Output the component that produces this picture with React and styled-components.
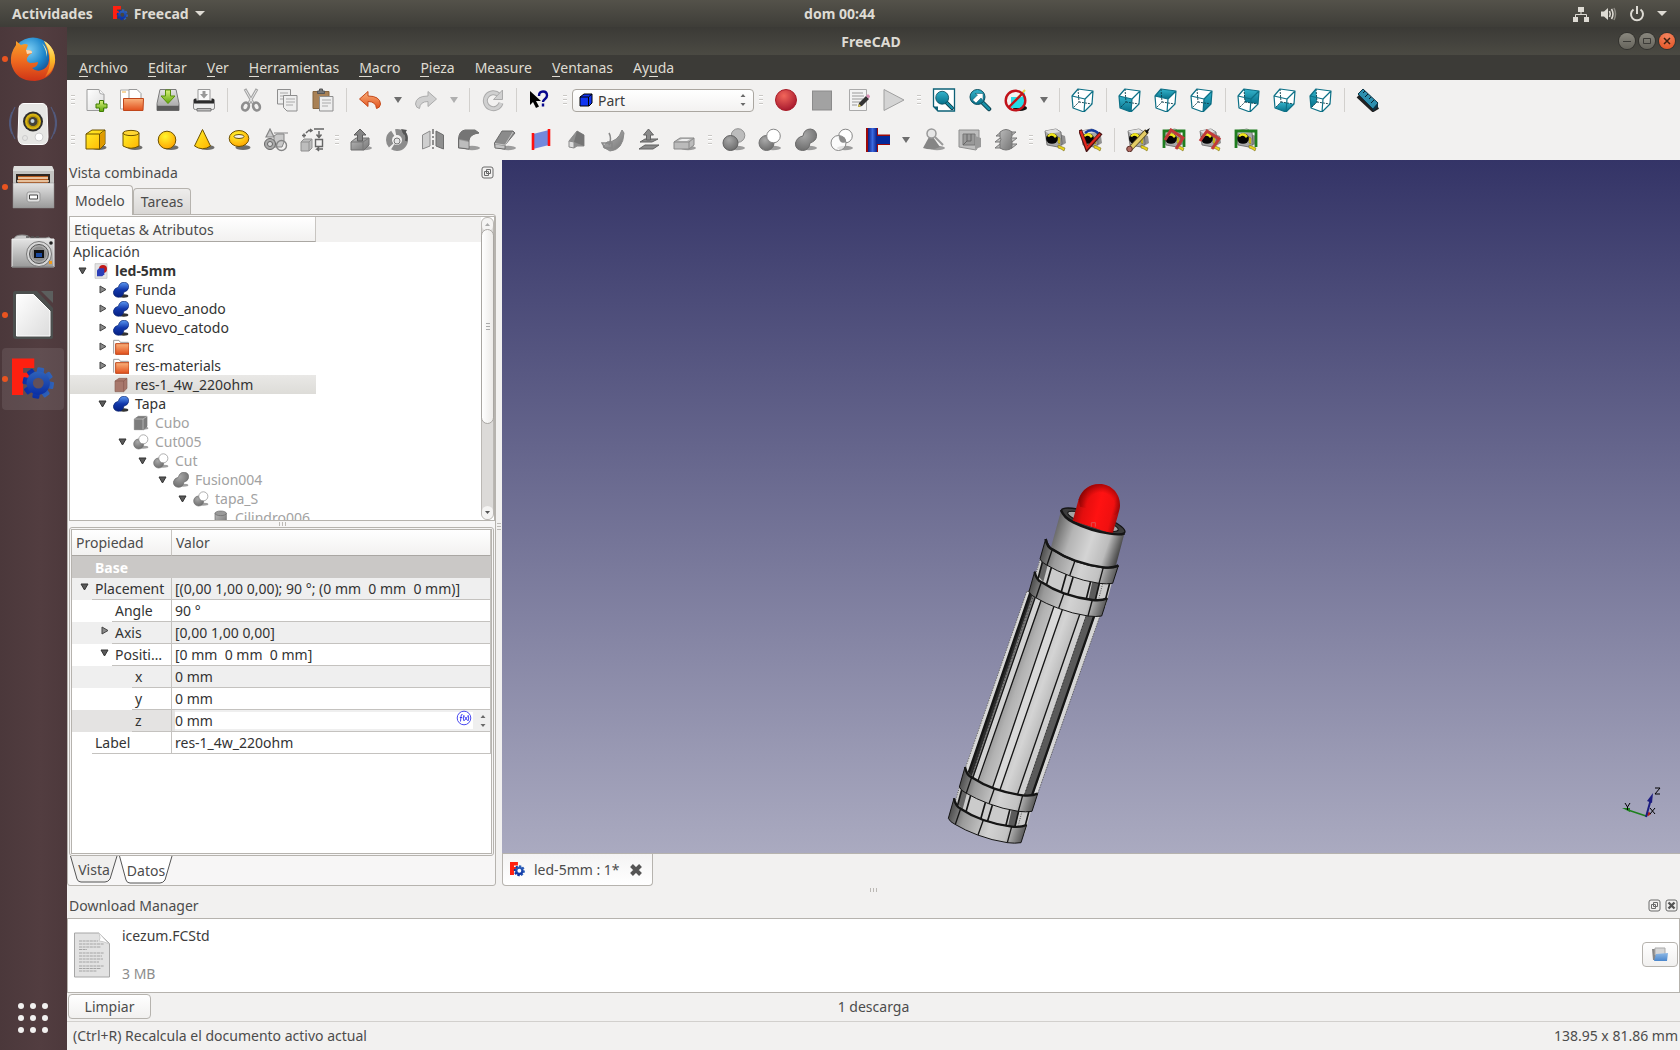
import React, { useState } from "react";
import styled, { createGlobalStyle } from "styled-components";

const GlobalStyle = createGlobalStyle`
  * { box-sizing: border-box; }
  html, body, #root { height: 100%; }
  body { margin: 0; overflow: hidden; font: 14px/19px "Noto Sans", "Open Sans", sans-serif; color: #3c3c3c; background: #f2f1f0; }
  button, input, select { font: inherit; color: inherit; margin: 0; padding: 0; border: 0; background: none; }
  button { cursor: default; }
  ul { list-style: none; margin: 0; padding: 0; }
  svg { display: block; flex: none; }
`;

/* ---------- shared paint ---------- */

const Lin = ({ id, stops, x2 = 0, y2 = 1 }) => (
  <linearGradient id={id} x1="0" y1="0" x2={x2} y2={y2}>
    {stops.map((c, i) => <stop key={i} offset={i / (stops.length - 1)} stopColor={c} />)}
  </linearGradient>
);
const Rad = ({ id, stops }) => (
  <radialGradient id={id} cx="0.4" cy="0.3" r="0.75">
    {stops.map((c, i) => <stop key={i} offset={i / (stops.length - 1)} stopColor={c} />)}
  </radialGradient>
);

const HiddenDefs = styled.svg`position: absolute; width: 0; height: 0;`;

const Paints = () => (
  <HiddenDefs aria-hidden="true">
    <defs>
      <Lin id="paper" stops={["#ffffff", "#dcdcdc"]} x2={1} />
      <Lin id="orange" stops={["#f9b27c", "#e2501c"]} />
      <Lin id="metal" stops={["#e4e4e4", "#9a9a9a"]} />
      <Lin id="green" stops={["#d8f27a", "#5fa50a"]} />
      <Lin id="yellow" stops={["#fff02a", "#ffb400"]} x2={1} />
      <Rad id="yellowBall" stops={["#fff62e", "#ffa200"]} />
      <Lin id="gray" stops={["#b9b9b9", "#757575"]} x2={1} />
      <Rad id="grayBall" stops={["#a8a8a8", "#6a6a6a"]} />
      <Lin id="teal" stops={["#35b4cc", "#06708a"]} />
      <Rad id="red" stops={["#f2665a", "#a3152c"]} />
      <Lin id="blue" stops={["#5c98f2", "#1238ac", "#061f80"]} />
      <Rad id="sky" stops={["#7fd0f4", "#1c86cc", "#10296a"]} />
      <Lin id="fire" stops={["#f7a12a", "#ee6a1f", "#cf3417"]} />
      <Lin id="sun" stops={["#fff39a", "#fbc02a", "#ee6a1f"]} />
      <Lin id="tube" stops={["#0a1f88", "#3b6ae0", "#0a1f88"]} x2={1} y2={0} />
      <Lin id="folderBlue" stops={["#8cb8e6", "#4a86cc"]} />
      <Lin id="gearBlue" stops={["#2f62b8", "#0a2fa4"]} />
    </defs>
  </HiddenDefs>
);

const Svg = ({ s = 24, w, h, box, children }) => (
  <svg width={w || s} height={h || s} viewBox={box || "0 0 24 24"} aria-hidden="true">{children}</svg>
);

/* ---------- icons ---------- */

const Shadow = ({ x = 15, y = 19.5 }) => <ellipse cx={x} cy={y} rx="7.5" ry="2.4" fill="#000" opacity=".55" />;
const GShadow = ({ x = 15, y = 20 }) => <ellipse cx={x} cy={y} rx="8" ry="2.2" fill="#777" opacity=".7" />;

const cubeFaces = {
  front: "1,8 14,11 13,24 2,20",
  top: "1,8 7,1 22,3 14,11",
  right: "14,11 22,3 21,16 13,24",
  rear: "7,1 22,3 21,16 8,14",
  bottom: "2,20 13,24 21,16 8,14",
  left: "1,8 7,1 8,14 2,20",
};
const ViewCube = ({ face }) => (
  <g strokeLinejoin="round">
    <polygon points="1,8 7,1 22,3 21,16 13,24 2,20" fill="#fff" />
    {face && <polygon points={cubeFaces[face]} fill="url(#teal)" />}
    <path d="M7 1L8 14L2 20M8 14L21 16" fill="none" stroke="#0b3a46" strokeWidth=".9" strokeDasharray="2 1" />
    <path d="M1 8L14 11L13 24L2 20ZM1 8L7 1L22 3L14 11M22 3L21 16L13 24" fill="none" stroke="#0d7086" strokeWidth="1.2" />
  </g>
);

const Tape = () => (
  <g>
    <path d="M14 5l8 3l1 7l-5 3z" fill="#000" opacity=".4" />
    <path d="M2 3L13 1L18 4L19 16L15 19L4 17Z" fill="#a9a9a9" stroke="#555" strokeWidth=".7" />
    <path d="M2 3L13 1L17 4L6 6Z" fill="#dedede" />
    <ellipse cx="9" cy="10.500" rx="6" ry="5.200" fill="#050505" />
    <path d="M4 8Q9 2 14 8L12 10Q9 6 6 9Z" fill="#f0e51d" />
    <path d="M15 9l2 1v6l-2-1zM15 17l7 3l-1 3l-3-2l-3-1z" fill="#e8d21a" stroke="#6b6114" strokeWidth=".5" />
  </g>
);

const DocPage = () => <path d="M3 1.500h12l5 5V22.500H3z" fill="url(#paper)" stroke="#9b9b9b" />;
const Magnifier = () => (
  <g>
    <path d="M14 14l7 7" stroke="#0b3f4c" strokeWidth="4.500" strokeLinecap="round" />
    <path d="M14 14l7 7" stroke="#1a90a8" strokeWidth="2.500" strokeLinecap="round" />
    <circle cx="9.500" cy="9" r="7.500" fill="url(#teal)" stroke="#0a4f60" />
  </g>
);

const freecadGear = (
  <g>
    <path d="M0 0H14V6H7V9H12V15H7V23H0Z" fill="#ff2010" />
    <g transform="translate(16.500 15.500)">
      {[0, 45, 90, 135].map((a) => (
        <rect key={a} x="-2.200" y="-9.800" width="4.400" height="19.600" rx=".8" fill="url(#gearBlue)" transform={`rotate(${a + 10})`} />
      ))}
      <circle r="7.300" fill="url(#gearBlue)" />
    </g>
  </g>
);
const Logo = ({ s = 16, hole = "#f2f1f0" }) => (
  <Svg s={s} box="0 0 26.500 26.500">
    {freecadGear}
    <circle cx="16.500" cy="15.500" r="3.400" fill={hole} />
  </Svg>
);

const I = {
  new: <><DocPage /><path d="M15 1.500l1 4l4 1" fill="#fff" stroke="#aaa" /><path d="M15.500 12.500h4v3.500h3.500v4h-3.500v3.500h-4v-3.500h-3.500v-4h3.500z" fill="url(#green)" stroke="#3f7d05" /></>,
  open: <><path d="M.5 2h9l2 3v16h-11z" fill="#fff" stroke="#aaa" /><path d="M2 4h4" stroke="#f0b040" /><path d="M9 1.500h8l4 4v6H9z" fill="#fff" stroke="#999" /><path d="M3.500 10.500h20l-.5 12H3.500z" fill="url(#orange)" stroke="#c0461a" /></>,
  save: <><path d="M4 1.500h16l3 14v7H1v-7z" fill="url(#metal)" stroke="#7a7a7a" /><path d="M1 16.500h22v6H1z" fill="#5b5b5b" /><path d="M1.500 17h21" stroke="#ddd" /><path d="M9.500 2h5v6h4.500l-7 7.500l-7-7.500h4.500z" fill="url(#green)" stroke="#579108" /></>,
  print: <><path d="M6 1.500h12v11H6z" fill="#fafafa" stroke="#999" /><path d="M10.500 3h3v3h2.500l-4 4.500l-4-4.500h2.500z" fill="#999" /><path d="M1.500 12q0-1.500 2-1.500h1v2h15v-2h1q2 0 2 1.500v8h-21z" fill="#2b2b2b" /><path d="M1.500 15.500h21v4.500q0 1.500-2 1.500h-17q-2 0-2-1.500z" fill="#ececec" stroke="#888" /><path d="M5 20.500h14v2.500H5z" fill="#bdbdbd" stroke="#777" /></>,
  cut: <g fill="none"><path d="M6 1L14.500 16M18 1L9.500 16" stroke="#a4a4a4" strokeWidth="3" /><path d="M6.500 2L14 15M17.500 2L10 15" stroke="#e8e8e8" strokeWidth="1" /><ellipse cx="6.500" cy="18.500" rx="3.200" ry="4" transform="rotate(25 6.500 18.500)" stroke="#8e8e8e" strokeWidth="2.600" /><ellipse cx="17.500" cy="18.500" rx="3.200" ry="4" transform="rotate(-25 17.500 18.500)" stroke="#8e8e8e" strokeWidth="2.600" /></g>,
  copy: <><path d="M2.500 1.500h13v14.500h-13z" fill="#eee" stroke="#8e8e8e" /><path d="M5 5h8M5 8h4M5 11h4" stroke="#aaa" /><path d="M8.500 7.500h13.500v15.500h-10l-3.500-3.500z" fill="#eee" stroke="#8e8e8e" /><path d="M11 11h9M11 14h9M11 17h7" stroke="#aaa" /></>,
  paste: <><path d="M2 3.500h16v17H2z" fill="#a98155" stroke="#85653f" /><path d="M6.500 5.500v-2.500h2v-2h3v2h2v2.500z" fill="#777" stroke="#555" /><path d="M8.500 8.500h13.500v14.500h-13.500z" fill="#eee" stroke="#8e8e8e" /><path d="M11 12h9M11 15h9M11 18h6" stroke="#aaa" /></>,
  undo: <path d="M1.500 11L10 3.500V8Q22 8 22.500 16Q22 20 18.500 20.500Q18 13.500 10 13.500V18.500Z" fill="url(#orange)" stroke="#c5491a" strokeLinejoin="round" />,
  redo: <path d="M22.500 11L14 3.500V8Q2 8 1.500 16Q2 20 5.500 20.500Q6 13.500 14 13.500V18.500Z" fill="#d0d0d0" stroke="#acacac" strokeLinejoin="round" />,
  refresh: <><path d="M18 7A8 8 0 1 0 20 15" fill="none" stroke="#ababab" strokeWidth="5" /><path d="M18 7A8 8 0 1 0 20 15" fill="none" stroke="#d0d0d0" strokeWidth="3" /><path d="M12.500 11.500H21.500V2Z" fill="#d0d0d0" stroke="#ababab" /></>,
  whats: <><path d="M2 3v14l3-3l3 6l3-1.500l-3-5.500h5z" fill="#000" /><path d="M11 8q0-4.500 4-4.500t4 4q0 2-2 3.500t-2 3M15 15.500v3" fill="none" stroke="#07078c" strokeWidth="2.400" /></>,
  record: <circle cx="12" cy="12" r="10.500" fill="url(#red)" stroke="#a91d28" />,
  stop: <rect x="2.500" y="3" width="19" height="19" fill="#a2a2a2" stroke="#8b8b8b" />,
  edit: <><path d="M3.500 1.500h17v21h-17z" fill="#f3f3f3" stroke="#aaa" /><path d="M6 5h11M6 8h12M6 11h11M6 14h8M6 17h5" stroke="#999" /><path d="M12 19l1-4l7-7l3 3l-7 7z" fill="#333" /><path d="M12 19l1-3l2 2z" fill="#ead24a" /><path d="M20 8l2-2l2.500 2.500l-2 2z" fill="#d88fb4" /></>,
  play: <path d="M2 1.500L22 12L2 22.500Z" fill="#d4d4d4" stroke="#a0a0a0" />,
  fit: <><path d="M1.500 1h21v22H6l-4.500-4.500z" fill="#fff" stroke="#0d6177" strokeWidth="1.300" /><path d="M1.500 18.500H6V23" fill="#0d6177" /><g transform="translate(2 2) scale(.86)"><Magnifier /></g></>,
  zoomSel: <><Magnifier /><path d="M4.500 12l5-5l-2.500-1.500h8v7l-2-2.500l-5 5z" fill="#fff" stroke="#0a4f60" strokeWidth=".5" /></>,
  noDraw: <><ellipse cx="16" cy="20" rx="7" ry="3" fill="#111" /><path d="M7 9h11l3-5v12l-4 4H7z" fill="#25dbe6" /><path d="M10 14L21 2" stroke="#ead24a" strokeWidth="2" /><circle cx="11.500" cy="12.500" r="9.800" fill="none" stroke="#c1121a" strokeWidth="2.400" /><path d="M4.500 5.500L18.500 19.500M18.500 5.500L4.500 19.500" stroke="none" /><path d="M4.500 19.500L18.500 5.500" stroke="#c1121a" strokeWidth="2.400" /></>,
  iso: <ViewCube />, front: <ViewCube face="front" />, top: <ViewCube face="top" />, right: <ViewCube face="right" />,
  rear: <ViewCube face="rear" />, bottom: <ViewCube face="bottom" />, left: <ViewCube face="left" />,
  ruler: <><path d="M2 8L17 22L22 19" stroke="#222" strokeWidth="4" fill="none" /><path d="M2 6L7 1L22 15L17 21Z" fill="#2d8fae" stroke="#0c3547" /><path d="M17 21L22 15v4l-5 4z" fill="#0c3547" /><path d="M9 3l-2 2M12 6l-3 3M15 9l-2 2M18 12l-3 3" stroke="#08202c" /></>,

  box: <><Shadow /><path d="M2 6L8 2H21V16L16 21H2Z" fill="url(#yellow)" stroke="#6e5200" strokeLinejoin="round" /><path d="M2 6H15.500L21 2M15.500 6V21" fill="none" stroke="#6e5200" /><path d="M16 6.500L20.500 3V16L16 20.500Z" fill="#e09a00" /></>,
  cyl: <><Shadow /><path d="M3 5V18q8 4.500 16 0V5z" fill="url(#yellow)" stroke="#6e5200" /><ellipse cx="11" cy="5" rx="8" ry="2.600" fill="#ffd633" stroke="#6e5200" /></>,
  sphere: <><Shadow /><circle cx="11" cy="12" r="8.800" fill="url(#yellowBall)" stroke="#6e5200" /></>,
  cone: <><Shadow /><path d="M10.500 1.500L2.500 18q8 5.500 16 0z" fill="url(#yellow)" stroke="#6e5200" /></>,
  torus: <><Shadow /><ellipse cx="11" cy="10.500" rx="9.800" ry="8" fill="url(#yellowBall)" stroke="#6e5200" /><ellipse cx="11" cy="8.500" rx="5" ry="2" fill="#f2f1f0" stroke="#6e5200" /></>,
  prims: <g stroke="#858585" fill="#c9c9c9"><path d="M6 1L2 9h8zM10 5h14" strokeWidth="1.200" /><path d="M10 8l3-2h7v8l-2 5h-8z" /><circle cx="6" cy="16" r="5.500" fill="#a9a9a9" stroke="#666" /><circle cx="6" cy="16" r="2.500" fill="#ddd" stroke="#666" /><circle cx="17.500" cy="17.500" r="5" fill="none" strokeWidth="1.400" /></g>,
  builder: <g stroke="#666" fill="none"><path d="M1 14l3-3h8v9l-3 3H1z" fill="#bdbdbd" stroke="#909090" /><path d="M1 14h8v9M9 14l3-3" stroke="#909090" /><path d="M15.500 11.500h7v7h-7zM14 1h10" strokeWidth="1.400" /><path d="M19 3v6M16.500 6.500l2.500 3l2.500-3M2 7.500h4M4 5.500v4M6 5l2-2M8 2.500h4M10 1l2 1.500l-2 1.500M23 21h-6l2-2M17 21l2 2" strokeWidth="1.500" /></g>,
  extrude: <><GShadow /><path d="M2 14l5-4h13v7l-5 5H2z" fill="url(#gray)" stroke="#6f6f6f" /><path d="M2 14h12l6-4M14 14v8" stroke="#777" fill="none" /><path d="M11 1l6 6h-3.500v6h-5V7H5z" fill="#858585" stroke="#5d5d5d" /></>,
  revolve: <><circle cx="12" cy="12" r="8" fill="none" stroke="#8c8c8c" strokeWidth="6" strokeDasharray="17 2 14 3" /><circle cx="12" cy="13" r="3" fill="#e4e4e4" stroke="#777" /><path d="M18 3q5 4 3 10" stroke="#555" fill="none" strokeWidth="2.400" /><path d="M16 1l6 1l-3 5z" fill="#555" /></>,
  mirror: <><path d="M1.500 7L9 3V18l-7.500 3z" fill="#cfcfcf" stroke="#8c8c8c" /><path d="M15 3l7.500 4v14L15 18z" fill="#8f8f8f" stroke="#6d6d6d" /><path d="M12 1v22" stroke="#777" strokeWidth="1.600" strokeDasharray="5 2 2 2" /></>,
  fillet: <><GShadow /><path d="M1.500 20V11Q2 3 8 2H18L22 5Q13 6 12 12V21Z" fill="#9a9a9a" stroke="#6a6a6a" /><path d="M1.500 11Q2 3 8 2H18L22 5Q13 6 12 13Z" fill="#757575" /><path d="M2.500 12L11.500 14V20.500L2.500 19Z" fill="#bdbdbd" /></>,
  chamfer: <><GShadow /><path d="M1.500 15L9 3H20L22 5L12 17V21L2 20Z" fill="#8b8b8b" stroke="#6a6a6a" /><path d="M2 15.500L12 17L20 4" stroke="#c4c4c4" fill="none" /><path d="M2.500 16.500L11.500 18V20.500L2.500 19.500Z" fill="#c4c4c4" /></>,
  ruled: <><path d="M4 6L20 2V17L4 21z" fill="#7388dd" /><path d="M4 5V22M20 1V18" stroke="#ff1010" strokeWidth="2.600" /></>,
  loft: <><path d="M4 13L12 3L19 7V18L12 18L9 20Z" fill="#8e8e8e" stroke="#8a8a8a" /><path d="M12 3L19 7V18L9 14Z" fill="#757575" /><path d="M4 13l5 1v6l-5-1z" fill="#dedede" stroke="#8a8a8a" /></>,
  sweep: <><path d="M6 14Q17 14 21 2l2 3q-1 17-14 18L2 19z" fill="url(#gray)" stroke="#8a8a8a" /><path d="M8 5q3 5 0 12M1 15h10v5H4z" stroke="#888" fill="none" strokeWidth="1.500" /></>,
  offset: <g fill="#8a8a8a" stroke="#636363"><path d="M2 21l6-4h14l-6 4zM3 14l5-3h13l-6 3z" /><path d="M11.500 1l5 6h-3v5h-4V7h-3z" /></g>,
  thick: <><GShadow /><path d="M1 14l6-4h14v7l-5 4H1z" fill="#bbb" stroke="#888" /><path d="M1 14h15l5-4M16 14v7" fill="none" stroke="#888" /><path d="M5 13l4-2h8l-3 2z" fill="#eee" /></>,
  boolean: <><GShadow /><circle cx="16" cy="7.500" r="6.800" fill="#bcbcbc" stroke="#909090" /><circle cx="8.500" cy="15" r="7.500" fill="url(#grayBall)" stroke="#606060" /></>,
  bcut: <><GShadow /><circle cx="8.500" cy="15" r="7.500" fill="url(#grayBall)" stroke="#707070" /><circle cx="15.500" cy="8" r="6.800" fill="#fff" stroke="#888" /></>,
  fuse: <><GShadow /><path d="M9 8Q10 1 16.500 1Q23 2 22.500 8.500Q22 13 16 15Q15 22.500 8.500 22.500Q1 22 1.500 15Q3 9 9 8Z" fill="url(#grayBall)" stroke="#6b6b6b" /></>,
  common: <><GShadow /><circle cx="15.500" cy="8" r="6.800" fill="#fff" stroke="#888" /><circle cx="8.500" cy="15" r="7.500" fill="#fff" fillOpacity=".7" stroke="#888" /><path d="M9 8q7-1 7 6q-7 3-7-6z" fill="#8c8c8c" /></>,
  connect: <><path d="M0 0h12v6.500h12v10.500H12v7H0z" fill="#9c0a0a" /><path d="M11 8h13v8H11z" fill="#062a9a" /><path d="M2 0h9v24H2z" fill="url(#tube)" /></>,
  check: <><GShadow /><path d="M7 9h4l7 10q-8 4-17 1z" fill="#858585" /><circle cx="9.500" cy="5.500" r="4.500" fill="#e6e6e6" stroke="#999" strokeWidth="1.500" /><path d="M13 9l8 8" stroke="#999" strokeWidth="2" /></>,
  section: <><path d="M1 2h20v15l-3 5L1 19z" fill="#bdbdbd" stroke="#8f8f8f" /><path d="M5 6h12v11H5z" fill="#999" stroke="#777" /><path d="M13 6v7H9l-4 4M9 13V6" stroke="#666" fill="none" /><path d="M17 8l6 2v9l-6 2z" fill="#9a9a9a" /></>,
  cross: <><path d="M1 20l5-4h17l-5 4zM1 14l5-4h17l-5 4zM2 8l5-4h15l-5 4z" fill="#999" fillOpacity=".55" stroke="#777" /><path d="M6 4q6-5 12 0v4q-2 3 0 5v7q-6 4-12 0v-6q2-3 0-5z" fill="url(#gray)" stroke="#777" /></>,
  mLinear: <Tape />,
  mAngle: <><Tape /><path d="M6 5q7-6 14 1" stroke="#153a9a" strokeWidth="2.400" fill="none" /><path d="M1 2L8 21L22 5" stroke="#4a1414" strokeWidth="4" fill="none" /><path d="M1.500 3L8 20L21 6" stroke="#e0261c" strokeWidth="2.200" fill="none" /></>,
  mRefresh: <><Tape /><path d="M3 22L21 3" stroke="#51431a" strokeWidth="5" /><path d="M4.500 20.500L20 4" stroke="#e4cd66" strokeWidth="3.500" /><path d="M24 0l-5 3l2 3z" fill="#111" /><circle cx="3.500" cy="21" r="2.800" fill="#b06a60" stroke="#5c302c" /></>,
  mClear: <><Tape /><path d="M2 20V3H22V19" fill="none" stroke="#1f7d1f" strokeWidth="2.800" /><path d="M3 12L9 2L21 10L14 21" stroke="#c23a3a" strokeWidth="3" fill="none" /></>,
  m3d: <><Tape /><path d="M2 13L9 3L21 11L14 21" stroke="#c23a3a" strokeWidth="3" fill="none" /></>,
  mDelta: <><Tape /><path d="M2 20V3H22V19" fill="none" stroke="#1f7d1f" strokeWidth="2.800" /></>,
};

/* ---------- top panel ---------- */

const Screen = styled.div`display: flex; flex-direction: column; height: 100vh;`;
const TopBar = styled.header`
  height: 27px; flex: none; display: grid; grid-template-columns: 1fr auto 1fr; align-items: center;
  padding: 0 13px 0 12px; font-weight: 700; color: #dedbd4; background: linear-gradient(#54524a, #3e3d38);
`;
const BarSide = styled.div`display: flex; align-items: center; gap: ${(p) => p.$gap}px; justify-content: ${(p) => p.$end ? "flex-end" : "flex-start"};`;
const BarButton = styled.button`display: flex; align-items: center; gap: 6px; white-space: nowrap;`;
const Desktop = styled.div`flex: 1; min-height: 0; display: flex;`;
const Caret = ({ color = "#dedbd4" }) => <Svg w={10} h={5} box="0 0 10 5"><path d="M0 0H10L5 5Z" fill={color} /></Svg>;

const Top = () => (
  <TopBar>
    <BarSide $gap={20}>
      <BarButton>Actividades</BarButton>
      <BarButton><Logo s={15} hole="#47463f" />Freecad<Caret /></BarButton>
    </BarSide>
    <BarButton>dom 00:44</BarButton>
    <BarSide $gap={12} $end>
      <Svg s={16} box="0 0 16 16"><path d="M5 1h6v5H5zM0 11h5v5H0zM11 11h5v5h-5z" fill="#dedbd4" /><path d="M8 6v3M2.500 11V8.500h11V11" fill="none" stroke="#dedbd4" /></Svg>
      <Svg s={16} box="0 0 16 16"><path d="M0 5.500h3L7 2v12l-4-3.500H0z" fill="#dedbd4" /><path d="M8.500 5q1.500 3 0 6M10.500 3q3 5 0 10" fill="none" stroke="#dedbd4" strokeWidth="1.600" /><path d="M13 2q3 6 0 12" fill="none" stroke="#8a8880" strokeWidth="1.500" /></Svg>
      <Svg s={16} box="0 0 16 16"><path d="M4.500 3.500A6 6 0 1 0 11.500 3.500M8 0v8" fill="none" stroke="#dedbd4" strokeWidth="2" /></Svg>
      <Caret />
    </BarSide>
  </TopBar>
);

/* ---------- launcher ---------- */

const Dock = styled.nav`
  width: 67px; flex: none; display: flex; flex-direction: column; align-items: center; gap: 2px; padding: 1px 3px 16px 2px;
  background: linear-gradient(90deg, #4b383b, #523d40 60%, #4d393c);
`;
const Launcher = styled.button`
  width: 62px; height: 62px; border-radius: 4px; display: flex; align-items: center; justify-content: center; position: relative;
  background: ${(p) => p.$active ? "rgba(255,255,255,.09)" : "none"};
  &::before { content: ""; position: absolute; left: 0; top: 28px; width: 6px; height: 6px; border-radius: 50%; background: ${(p) => p.$running ? "#e95420" : "transparent"}; }
`;
const DockSpace = styled.div`flex: 1;`;
const AppsButton = styled.button`width: 32px; height: 32px;`;

const apps = [
  { n: "Firefox", run: true, icon: (
    <Svg s={48} box="0 0 48 48">
      <circle cx="24" cy="24" r="21.500" fill="url(#sky)" />
      <path d="M35 6Q47 13 46 27Q44 44 26 46Q6 46 2 28Q1 18 7 10L7 6L12 10Q17 8 19 10L17 15Q24 15 23 18Q19 20 18 23Q17 27 21 28Q25 28 29 27Q29 32 23 33Q28 38 35 34Q41 30 40 21Q39 14 35 6Z" fill="url(#fire)" />
      <path d="M35 6Q47 13 46 27Q44 37 36 42Q41 34 41 25Q41 14 35 6Z" fill="url(#sun)" />
      <path d="M33 8Q39 14 38 22Q37 14 33 8Z" fill="#fff3b0" />
      <path d="M17 15Q24 15 23 18L18 19Z" fill="#fbd7b0" />
    </Svg>) },
  { n: "Rhythmbox", icon: (
    <Svg s={48} box="0 0 48 48">
      <path d="M6 8Q-3 24 6 40M3 13Q-2 24 3 35M42 8Q51 24 42 40M45 13Q50 24 45 35" fill="none" stroke="#52628c" strokeWidth="1.200" opacity=".8" />
      <path d="M15 4.500H33Q37 4.500 38 9L39 38Q39 45.500 33 45.500H15Q9 45.500 9 38L10 9Q11 4.500 15 4.500Z" fill="#e6e6e4" stroke="#fff" />
      <circle cx="24" cy="22.500" r="10" fill="#2d2d2d" /><circle cx="24" cy="22.500" r="8" fill="#d6b414" /><circle cx="24" cy="22.500" r="6" fill="#b89408" /><circle cx="24" cy="22.500" r="4.500" fill="#44423a" /><circle cx="23.500" cy="22" r="2" fill="#c9d6de" />
      <circle cx="30" cy="38" r="4" fill="#fff" stroke="#cfcfcf" /><circle cx="16" cy="39" r="2.500" fill="none" stroke="#ccc" />
    </Svg>) },
  { n: "Archivos", run: true, icon: (
    <Svg s={48} box="0 0 48 48">
      <path d="M5 3h38l2 4v38H4V7z" fill="#c4c4c2" /><path d="M5 3h38l2 5H4z" fill="#dededc" />
      <path d="M7 11h34v10H7z" fill="#2f2722" /><path d="M9 13h30v7H9z" fill="#b4581c" /><path d="M9 15h30M8 18h32" stroke="#f6e2c6" strokeWidth="1.400" />
      <path d="M4 20h41v25H4z" fill="url(#metal)" stroke="#8f8f8f" strokeWidth=".5" />
      <rect x="18" y="29" width="13" height="10" rx="2" fill="#e2e2e2" stroke="#999" /><path d="M20.500 32h8v4h-8z" fill="#fff" stroke="#444" />
    </Svg>) },
  { n: "Shotwell", icon: (
    <Svg s={48} box="0 0 48 48">
      <path d="M5 12q1-4 8-4t8 3h16l3-1l3 3z" fill="#c9c9c9" stroke="#8a8a8a" /><path d="M3 12h42v28H3z" fill="url(#metal)" stroke="#eee" /><path d="M3 40h42" stroke="#555" />
      <path d="M17 10h14" stroke="#555" strokeWidth="1.500" strokeDasharray="3 2" />
      <circle cx="30" cy="27" r="12.500" fill="#d6d6d6" stroke="#777" /><circle cx="30" cy="27" r="9.500" fill="#aaa" stroke="#555" /><circle cx="30" cy="27" r="7.500" fill="#8f8f8f" /><path d="M25 23h10v8H25z" fill="#111" /><path d="M27 26h6v4h-6z" fill="#1b4aa0" />
      <circle cx="42" cy="16" r="1.800" fill="#222" /><path d="M40 34h3v3h-3z" fill="#f09a1a" />
    </Svg>) },
  { n: "LibreOffice", run: true, icon: (
    <Svg s={48} box="0 0 48 48">
      <path d="M6 0h22L44 17v29q0 2-2 2H7q-3 0-3-3V3q0-3 2-3z" fill="#4c4f4e" /><path d="M32 0h12v12z" fill="#5c5f5e" />
      <path d="M7.500 3.500h17L41 20v25H7.500z" fill="url(#paper)" stroke="#fff" />
    </Svg>) },
  { n: "FreeCAD", run: true, active: true, icon: (
    <Svg s={43} box="0 0 27 26.500">{freecadGear}<circle cx="16.500" cy="15.500" r="3.400" fill="#63505a" /></Svg>) },
];

/* ---------- window chrome ---------- */

const Window = styled.main`flex: 1; min-width: 0; display: flex; flex-direction: column;`;
const TitleBar = styled.div`
  height: 28px; flex: none; display: grid; grid-template-columns: 1fr auto 1fr; align-items: center; padding-right: 5px;
  font-weight: 700; color: #dedbd4; background: linear-gradient(#3b3a36, #4b4a43);
`;
const WindowButtons = styled.div`grid-column: 3; display: flex; gap: 4px; justify-content: flex-end;`;
const WindowButton = styled.button`
  width: 16px; height: 16px; border-radius: 50%; display: grid; place-items: center; box-shadow: 0 0 0 1px #33322e;
  background: ${(p) => p.$close ? "radial-gradient(circle at 50% 20%, #f4845f, #e2501f)" : "linear-gradient(#8a887f, #66645c)"};
`;
const TitleText = styled.span`grid-column: 2;`;
const MenuBar = styled.nav`height: 25px; flex: none; display: flex; align-items: center; gap: 20px; padding: 0 12px; background: #3c3b37; color: #dfdbd2;`;
const MenuItem = styled.button`
  white-space: nowrap;
  u { text-decoration: none; box-shadow: 0 1px 0 #dfdbd2; display: inline-block; height: 18px; }
`;
const menus = [["", "A", "rchivo"], ["", "E", "ditar"], ["", "V", "er"], ["", "H", "erramientas"], ["", "M", "acro"], ["", "P", "ieza"], ["Measure", "", ""], ["", "V", "entanas"], ["Ay", "u", "da"]];

/* ---------- toolbars ---------- */

const Toolbars = styled.div`height: 80px; flex: none; background: #f2f1f0;`;
const Toolbar = styled.div`height: 40px; display: flex; align-items: center;`;
const ToolButton = styled.button`width: 36px; height: 36px; display: grid; place-items: center;`;
const DropButton = styled.button`width: 20px; height: 36px; display: grid; place-items: center;`;
const Handle = styled.div`
  width: ${(p) => p.$w}px; height: 10px; display: flex; justify-content: center; flex: none;
  &:first-child { width: 11px; }
  &::before { content: ""; width: 4px; height: 10px; background: repeating-linear-gradient(#c9c7c4 0 1px, #fff 1px 2px, transparent 2px 4px); }
`;
const Divider = styled.div`width: 11px; height: 24px; display: flex; justify-content: center; &::before { content: ""; width: 1px; background: #d2d0cd; }`;
const Combo = styled.label`
  width: 182px; height: 23px; display: flex; align-items: center; gap: 5px; padding: 0 6px; border: 1px solid #aaa6a0; border-radius: 4px;
  background: linear-gradient(#ffffff, #f3f2f1);
`;
const ComboSelect = styled.select`flex: 1; appearance: none; outline: none; height: 20px;`;

const toolRows = [
  { handle: 14, items: ["|h", "new", "open", "save", "print", "|s", "cut", "copy", "paste", "|s", "undo", "|d", "redo", "|e", "|s", "refresh", "|s", "whats", "|h", "|combo", "|h", "record", "stop", "edit", "play", "|h", "fit", "zoomSel", "noDraw", "|d", "|s", "iso", "|s", "front", "top", "right", "|s", "rear", "bottom", "left", "|s", "ruler"] },
  { handle: 13, items: ["|h", "box", "cyl", "sphere", "cone", "torus", "prims", "builder", "|h", "extrude", "revolve", "mirror", "fillet", "chamfer", "ruled", "loft", "sweep", "offset", "thick", "|h", "boolean", "bcut", "fuse", "common", "connect", "|d", "check", "section", "cross", "|h", "mLinear", "mAngle", "|s", "mRefresh", "mClear", "m3d", "mDelta"] },
];

const Spin = () => <Svg w={8} h={14} box="0 0 8 14"><path d="M1.500 4L4 1L6.500 4ZM1.500 10L4 13L6.500 10Z" fill="#6a6a6a" /></Svg>;

const ToolItem = ({ id, handle }) => {
  if (id === "|h") return <Handle $w={handle} />;
  if (id === "|s") return <Divider />;
  if (id === "|d" || id === "|e") return <DropButton aria-label="Más"><Svg w={8} h={6} box="0 0 8 6"><path d="M0 0H8L4 6Z" fill={id === "|d" ? "#6e6e6e" : "#b0b0b0"} /></Svg></DropButton>;
  if (id === "|combo") return (
    <Combo>
      <Svg s={14} box="0 0 14 14"><path d="M1 4l4-3h8v9l-3 3H1z" fill="#1034f0" stroke="#000" /><path d="M1 4h8.500v9M9.500 4L13 1" fill="none" stroke="#000" /></Svg>
      <ComboSelect aria-label="Banco de trabajo"><option>Part</option></ComboSelect>
      <Spin />
    </Combo>
  );
  return <ToolButton aria-label={id}><Svg>{I[id]}</Svg></ToolButton>;
};

/* ---------- combo view ---------- */

const WorkArea = styled.div`flex: 1; min-height: 0; display: flex;`;
const ComboView = styled.section`width: 435px; flex: none; padding-right: 6px; display: flex; flex-direction: column; position: relative;`;
const PanelTitle = styled.div`height: 25px; flex: none; display: flex; align-items: center; gap: 4px; padding: 0 2px; color: #4c4c4c;`;
const Grow = styled.span`flex: 1;`;
const FloatButton = styled.button`width: 13px; height: 13px;`;
const TabRow = styled.div`height: 29px; flex: none; display: flex; align-items: flex-end;`;
const Tab = styled.button`
  height: ${(p) => p.$on ? 30 : 26}px; padding: 0 7px 1px; border: 1px solid #b6b3ae; border-bottom: 0; border-radius: 4px 4px 0 0; color: #4c4c4c;
  background: ${(p) => p.$on ? "#f7f6f6" : "linear-gradient(#eeedec, #d9d7d5)"}; position: relative; z-index: ${(p) => p.$on ? 1 : 0}; margin-bottom: ${(p) => p.$on ? "-1px" : 0};
`;
const TabPane = styled.div`
  flex: 1; min-height: 0; display: flex; flex-direction: column; border: 1px solid #b6b3ae; border-radius: 0 3px 3px 3px; padding: 1px 0 0 1px; background: #f7f6f6;
`;
const TreeFrame = styled.div`flex: 306 1 0; min-height: 0; border: 1px solid #b6b3ae; display: flex; overflow: hidden; background: #fff;`;
const TreeBody = styled.div`flex: 1; min-width: 0; overflow: hidden;`;
const TreeHeader = styled.div`height: 25px; background: #f2f1f0;`;
const TreeHeaderCell = styled.div`
  width: 246px; height: 25px; padding: 3px 4px; color: #4c4c4c; border-right: 1px solid #c8c5c1; border-bottom: 1px solid #aaa7a3; background: linear-gradient(#fff, #f2f1f0);
`;
const TreeRow = styled.li`
  width: 246px; height: 19px; display: flex; align-items: center; white-space: nowrap; padding-left: ${(p) => p.$d * 20 - 16}px;
  color: ${(p) => p.$dim ? "#a2a2a2" : "#333"}; font-weight: ${(p) => p.$bold ? 700 : 400};
  background: ${(p) => p.$sel ? "linear-gradient(#e9e8e6, #dddcd8)" : "none"};
`;
const RootRow = styled.li`height: 19px; padding-left: 3px;`;
const Expander = styled.button`width: 16px; height: 16px; flex: none; display: grid; place-items: center;`;
const TreeIcon = styled.span`width: 16px; margin: 0 6px 0 3px; display: flex; justify-content: center;`;
const ScrollTrack = styled.div`width: 13px; flex: none; display: flex; flex-direction: column; border: 1px solid #bbb8b4; border-radius: 6px; background: #dcdad8;`;
const ScrollEnd = styled.button`height: 13px; display: grid; place-items: center; background: #f5f4f3; border-radius: 6px;`;
const Thumb = styled.div`
  height: 195px; margin: -2px -1px 0; border: 1px solid #a9a6a2; border-radius: 7px; background: linear-gradient(90deg, #fff, #eceae8);
  display: grid; place-items: center;
  &::before { content: ""; width: 4px; height: 8px; background: repeating-linear-gradient(#aaa 0 1px, transparent 1px 3px); }
`;
const Splitter = styled.div`
  height: ${(p) => p.$h}px; flex: none; display: grid; place-items: center;
  &::before { content: ""; width: 7px; height: 4px; background: repeating-linear-gradient(90deg, #bcb9b5 0 1px, transparent 1px 3px); }
`;
const SideGrip = styled.div`position: absolute; right: 1px; top: 50%; width: 4px; height: 7px; background: repeating-linear-gradient(#bcb9b5 0 1px, transparent 1px 3px);`;

const Arrow = ({ open }) => (
  <Svg s={9} box="0 0 9 9">{open ? <path d="M1 2H8L4.500 8Z" fill="#5a5a5a" stroke="#333" /> : <path d="M2 1V8L8 4.500Z" fill="#8a8a8a" stroke="#444" />}</Svg>
);
const fusePath = "M8 8Q10 0 17 .5Q24 1 23.500 8.500Q22 14 16.500 15Q15 23 8 23Q.5 22 .5 15Q2 9 8 8Z";
const TI = {
  doc: <><path d="M3 1h18v22H3z" fill="#e4e4e4" stroke="#bbb" /><circle cx="15" cy="9" r="6" fill="#c01818" /><path d="M6 11l3-3h8v9l-3 3H6z" fill="#2c3fb8" /></>,
  blue: <><ellipse cx="16" cy="21" rx="7" ry="2.500" fill="#333" /><path d={fusePath} fill="url(#blue)" stroke="#0a2470" /></>,
  folder: <><path d="M1 22V2h8l2 3h12v17" fill="#fff" stroke="#999" strokeWidth="1.500" /><path d="M4 7h20v16H4z" fill="url(#orange)" stroke="#c0461a" strokeWidth="1.500" /></>,
  brown: <><path d="M3 6l6-4h12v15l-5 5H3z" fill="#a8786c" stroke="#8a6056" /><path d="M3 6h13v16M16 6l5-4" fill="none" stroke="#87584d" /></>,
  cube: <><GShadow /><path d="M2 6l6-4h13v15l-5 5H2z" fill="#7d7d7d" stroke="#777" /><path d="M2 6h13v16M15 6l6-4" fill="none" stroke="#ccc" /></>,
  cut: I.bcut,
  fuse: <><GShadow /><path d={fusePath} fill="url(#grayBall)" stroke="#6b6b6b" /></>,
  cyl: <><GShadow /><path d="M3 5V20q8 4 17 0V5z" fill="url(#gray)" stroke="#666" /><ellipse cx="11.500" cy="5" rx="8.500" ry="3.500" fill="#999" stroke="#666" /></>,
};
const tree = [
  { d: 1, t: "led-5mm", i: "doc", open: true, bold: true },
  { d: 2, t: "Funda", i: "blue", open: false },
  { d: 2, t: "Nuevo_anodo", i: "blue", open: false },
  { d: 2, t: "Nuevo_catodo", i: "blue", open: false },
  { d: 2, t: "src", i: "folder", open: false },
  { d: 2, t: "res-materials", i: "folder", open: false },
  { d: 2, t: "res-1_4w_220ohm", i: "brown", sel: true },
  { d: 2, t: "Tapa", i: "blue", open: true },
  { d: 3, t: "Cubo", i: "cube", dim: true },
  { d: 3, t: "Cut005", i: "cut", open: true, dim: true },
  { d: 4, t: "Cut", i: "cut", open: true, dim: true },
  { d: 5, t: "Fusion004", i: "fuse", open: true, dim: true },
  { d: 6, t: "tapa_S", i: "cut", open: true, dim: true },
  { d: 7, t: "Cilindro006", i: "cyl", dim: true },
];

const PropOuter = styled.div`flex: 328 1 0; min-height: 0; margin-right: 1px; padding: 1px; border: 1px solid #b6b3ae; border-radius: 3px; display: flex;`;
const PropFrame = styled.div`flex: 1; border: 1px solid #b6b3ae; background: #fff; overflow: hidden;`;
const PropTable = styled.table`width: 100%; table-layout: fixed; border-collapse: separate; border-spacing: 0;`;
const NameCol = styled.col`width: 100px;`;
const PropTh = styled.th`
  height: 26px; padding: 0 4px; text-align: left; font-weight: 400; color: #4c4c4c; background: linear-gradient(#fff, #f2f1f0);
  border-bottom: 1px solid #aaa7a3; border-right: 1px solid #c8c5c1;
`;
const GroupCell = styled.td`height: 22px; padding: 0 0 0 23px; background: #cac8c6; color: #fff; font-weight: 700;`;
const PropRow = styled.tr`background: ${(p) => p.$sel ? "#e4e3e2" : p.$alt ? "#efefef" : "#fff"};`;
const NameTd = styled.td`padding: 0; border-right: 1px solid #c4c2bf;`;
const NameFlex = styled.div`display: flex; height: 22px; padding-left: ${(p) => 4 + p.$d * 20}px;`;
const PropLabel = styled.span`flex: 1; min-width: 0; padding: 1px 4px 0 3px; border-bottom: 1px solid #c4c2bf; overflow: hidden; text-overflow: ellipsis; white-space: nowrap; color: #333;`;
const ValueTd = styled.td`height: 22px; padding: 0 0 0 3px; white-space: pre; border-bottom: 1px solid #c4c2bf; border-right: 1px solid #c4c2bf; color: #333;`;
const EditBox = styled.div`display: flex; align-items: center; height: 21px; background: #efefef; padding-right: 3px;`;
const ValueInput = styled.input`flex: 1; min-width: 0; height: 17px; background: #fff; outline: none;`;
const FxButton = styled.button`width: 18px; height: 17px; background: #fff; display: grid; align-items: start; justify-items: center; margin-right: 6px; svg { margin-top: -2px; }`;

const props = [
  { n: "Placement", v: "[(0,00 1,00 0,00); 90 °; (0 mm  0 mm  0 mm)]", d: 0, open: true },
  { n: "Angle", v: "90 °", d: 1 },
  { n: "Axis", v: "[0,00 1,00 0,00]", d: 1, open: false },
  { n: "Position", v: "[0 mm  0 mm  0 mm]", d: 1, open: true },
  { n: "x", v: "0 mm", d: 2 },
  { n: "y", v: "0 mm", d: 2 },
  { n: "z", v: "0 mm", d: 2, edit: true },
  { n: "Label", v: "res-1_4w_220ohm", d: 0 },
];

const BottomTabs = styled.div`height: 29px; flex: none; display: flex; align-items: flex-start; gap: 1px; padding-left: 1px;`;
const SlantTab = styled.button`
  width: ${(p) => p.$w}px; height: ${(p) => p.$h}px; color: #4c4c4c; display: grid; grid-template-areas: "x"; place-items: center; position: relative;
  svg, span { grid-area: x; }
  span { position: relative; }
`;
const Slant = ({ w, h, on }) => (
  <Svg w={w} h={h} box={`0 0 ${w} ${h}`}>
    <path d={`M.5 0L7 ${h - 4}Q8 ${h - 1} 11 ${h - 1}H${w - 13}Q${w - 10} ${h - 1} ${w - 8} ${h - 4}L${w - 1} 0`} fill={on ? "#fff" : "#f0efee"} stroke="#555" />
  </Svg>
);

/* ---------- 3D view ---------- */

const Mdi = styled.section`flex: 1; min-width: 0; display: flex; flex-direction: column;`;
const Canvas = styled.div`flex: 1; min-height: 0; position: relative; overflow: hidden; border-bottom: 1px solid #b6b3ae; background: linear-gradient(#343467, #aaaac0);`;
const ModelPlace = styled.div`position: absolute; left: calc(50% - 161px); top: 300px;`;
const AxesPlace = styled.div`position: absolute; right: 18px; bottom: 32px;`;
const DocTab = styled.div`
  width: 151px; height: 32px; flex: none; display: flex; align-items: center; gap: 9px; padding: 0 10px 0 7px; color: #4c4c4c;
  border: 1px solid #b6b3ae; border-top: 0; border-radius: 0 0 4px 4px; background: linear-gradient(#f4f3f3, #fff);
`;
const DocName = styled.button`flex: 1; text-align: left; white-space: nowrap;`;
const CloseButton = styled.button`width: 14px; height: 14px;`;

const Ring = ({ x, y }) => (
  <g transform={`translate(${x} ${y})`}>
    <path d="M347 237Q352 262 367 268Q400 290 435 302Q478 317 520 322Q548 325 565 317L548 370Q530 373 507 370Q460 363 418 347Q380 333 350 315Q335 308 330 297Z" fill="url(#shade)" stroke="#151515" strokeWidth="3" />
    <path d="M347 237Q352 262 367 268Q400 290 435 302Q478 317 520 322Q548 325 565 317" fill="none" stroke="#151515" strokeWidth="7" />
    <path d="M367 268L351 315M435 302L419 347M520 322L507 370" stroke="#151515" strokeWidth="4" />
  </g>
);
const Neck = ({ x, y }) => (
  <g transform={`translate(${x} ${y})`}>
    <path d="M332 290L314 350Q400 440 526 440L548 360Q440 330 332 290Z" fill="#cbcbcb" />
    <path d="M338 306L326 350L340 365L354 312Z" fill="#666" />
    <path d="M488 360L474 425L496 430L510 365Z" fill="#5a5a5a" />
    <path d="M338 303L324 356M366 316L350 372M410 338L394 395M431 346L414 402M483 360L467 424M509 366L494 428M540 366L524 428" stroke="#151515" strokeWidth="5" />
    <path d="M330 300L318 340M518 371L507 413" stroke="#555" strokeWidth="3" strokeDasharray="3 4" />
  </g>
);

const Model = () => (
  <Svg w={220} h={400} box="0 0 660 1200">
    <defs>
      <linearGradient id="shade" gradientUnits="userSpaceOnUse" x1="335" y1="270" x2="560" y2="340">
        <stop offset="0" stopColor="#4a4a4a" /><stop offset=".2" stopColor="#9a9a9a" /><stop offset=".55" stopColor="#d2d2d2" /><stop offset=".78" stopColor="#c2c2c2" /><stop offset="1" stopColor="#555" />
      </linearGradient>
      <linearGradient id="tubeShade" gradientUnits="userSpaceOnUse" x1="378" y1="205" x2="570" y2="270">
        <stop offset="0" stopColor="#6a6a6a" /><stop offset=".25" stopColor="#b4b4b4" /><stop offset=".55" stopColor="#d4d4d4" /><stop offset=".8" stopColor="#bcbcbc" /><stop offset="1" stopColor="#4a4a4a" />
      </linearGradient>
      <linearGradient id="body" gradientUnits="userSpaceOnUse" x1="200" y1="650" x2="415" y2="725">
        <stop offset="0" stopColor="#666" /><stop offset=".3" stopColor="#b2b2b2" /><stop offset=".6" stopColor="#d4d4d4" /><stop offset=".8" stopColor="#b8b8b8" /><stop offset="1" stopColor="#666" />
      </linearGradient>
      <linearGradient id="led" gradientUnits="userSpaceOnUse" x1="436" y1="138" x2="570" y2="172">
        <stop offset="0" stopColor="#a80a0a" /><stop offset=".2" stopColor="#e40e0e" /><stop offset=".5" stopColor="#ff1212" /><stop offset=".8" stopColor="#f01010" /><stop offset="1" stopColor="#8e0808" />
      </linearGradient>
      <radialGradient id="dome" gradientUnits="userSpaceOnUse" cx="512" cy="140" r="70">
        <stop offset=".6" stopColor="#800" stopOpacity="0" /><stop offset="1" stopColor="#700" stopOpacity=".7" />
      </radialGradient>
    </defs>
    <path d="M290 395L105 925L112 945Q190 1030 315 1015L322 1002L510 467L500 440L310 380Z" fill="url(#body)" />
    <path d="M290 395L105 925L114 940L302 398Z" fill="#d8d8d8" />
    <path d="M302 398L116 940L133 955L320 405Z" fill="#2a2a2a" />
    <path d="M309 400L124 950L133 958L321 404Z" fill="#7a7a7a" />
    <path d="M320 400L129 955L146 965L337 405Z" fill="#d2d2d2" />
    <path d="M375 430L187 985L209 992L400 440Z" fill="#d9d9d9" />
    <path d="M452 455L262 1006L280 1010L470 460Z" fill="#cfcfcf" />
    <path d="M470 460L281 1008L304 1010L497 461Z" fill="#5a5a5a" />
    <path d="M495 467L310 1002L322 1002L510 467Z" fill="#d6d6d6" />
    <path d="M337 410L144 962M375 430L187 985M400 440L209 992M452 455L262 1005M320 400L129 952" stroke="#151515" strokeWidth="4" />
    <path d="M301 398L116 938M495 461L306 1006" stroke="#151515" strokeWidth="7" />
    <path d="M290 395L106 925M510 467L323 1002" stroke="#444" strokeWidth="2" strokeDasharray="4 4" />
    <path d="M471 460L283 1006M311 404L127 942" stroke="#222" strokeWidth="2" strokeDasharray="4 6" />
    <Neck x={-242} y={683} />
    <Ring x={-242} y={684} />
    <Ring x={-275} y={778} />
    <Neck x={0} y={0} />
    <Ring x={-33} y={98} />
    <Ring x={0} y={0} />
    <ellipse cx="489" cy="184" rx="101" ry="24" transform="rotate(19 489 184)" fill="#3c3c3c" stroke="#151515" strokeWidth="4" />
    <ellipse cx="489" cy="184" rx="80" ry="16" transform="rotate(19 489 184)" fill="#a4a4a4" stroke="#151515" strokeWidth="3" />
    <path d="M428 182L446 118C456 88 480 72 508 72C545 72 571 102 570 138C568 155 560 178 548 222Z" fill="url(#led)" />
    <path d="M446 118C456 88 480 72 508 72C545 72 571 102 570 138Q568 160 555 165L450 140Z" fill="url(#dome)" />
    <path d="M484 200v-12h12v12" fill="none" stroke="#e05050" strokeWidth="3" />
    <path d="M393 152Q402 174 430 187Q480 212 540 221Q570 226 583 221L557 320Q500 324 435 300Q385 278 363 262Z" fill="url(#tubeShade)" />
    <path d="M393 150Q402 174 430 187Q480 212 540 221Q570 226 584 220" fill="none" stroke="#151515" strokeWidth="7" />
    <path d="M347 237Q352 262 367 268Q400 290 435 302Q478 317 520 322Q548 325 565 317" fill="none" stroke="#151515" strokeWidth="7" />
  </Svg>
);

const Axes = () => (
  <Svg w={40} h={34} box="0 0 40 34">
    <path d="M24 29L6 23" stroke="#1d801d" strokeWidth="1.600" /><path d="M0 21l8 0v4z" fill="#1d801d" />
    <path d="M25 28l3-2" stroke="#b02020" strokeWidth="3" />
    <path d="M24 30L29 12" stroke="#1c1c80" strokeWidth="2" /><path d="M31 6l-6 8l5 2z" fill="#1c1c80" />
    <path d="M3 16l2.500 4l2.500-4M5.500 20v3M28 21l5 6M33 21l-5 6M33 1h5l-5 6h5" fill="none" stroke="#000" />
  </Svg>
);

/* ---------- download manager ---------- */

const Downloads = styled.section`flex: none; display: flex; flex-direction: column;`;
const DownloadItem = styled.div`
  height: 75px; display: flex; align-items: center; padding: 0 1px 2px 6px; gap: 12px; border: 1px solid #b6b3ae; background: #fff;
`;
const DownloadText = styled.div`flex: 1; height: 57px; display: flex; flex-direction: column; justify-content: space-between;`;
const Muted = styled.span`color: #8c8c8c;`;
const PushButton = styled.button`
  width: ${(p) => p.$w}px; height: 25px; border: 1px solid #b6b3ae; border-radius: 4px; background: linear-gradient(#fff, #f1f0ef); color: #4c4c4c;
  display: grid; place-items: center;
`;
const DownloadFooter = styled.div`height: 28px; display: grid; grid-template-columns: 1fr auto 1fr; align-items: center; padding: 0 1px 2px; color: #4c4c4c;`;
const StatusBar = styled.footer`height: 29px; flex: none; display: flex; align-items: center; justify-content: space-between; padding: 0 2px 2px 6px; color: #4c4c4c; border-top: 1px solid #d2d0cd;`;

const FloatIcon = () => <Svg s={13} box="0 0 13 13"><rect x="1" y="1" width="11" height="11" rx="2" fill="none" stroke="#6a6a6a" /><path d="M5.500 3.500h4v4h-4zM3.500 5.500h4v4h-4z" fill="none" stroke="#6a6a6a" /></Svg>;
const CloseIcon = () => <Svg s={13} box="0 0 13 13"><rect x="1" y="1" width="11" height="11" rx="2" fill="none" stroke="#6a6a6a" /><path d="M3.500 3.500l6 6M9.500 3.500l-6 6" stroke="#555" strokeWidth="2.400" /></Svg>;

export default function App() {
  const [z, setZ] = useState("0 mm");
  return (
    <Screen>
      <GlobalStyle />
      <Paints />
      <Top />
      <Desktop>
        <Dock>
          {apps.map((a) => <Launcher key={a.n} aria-label={a.n} $active={a.active} $running={a.run}>{a.icon}</Launcher>)}
          <DockSpace />
          <AppsButton aria-label="Mostrar aplicaciones">
            <Svg s={32} box="0 0 32 32">{[4, 16, 28].map((y) => [4, 16, 28].map((x) => <circle key={`${x}-${y}`} cx={x} cy={y} r="3" fill="#f2f1f0" />))}</Svg>
          </AppsButton>
        </Dock>
        <Window>
          <TitleBar>
            <TitleText>FreeCAD</TitleText>
            <WindowButtons>
              <WindowButton aria-label="Minimizar"><Svg s={8} box="0 0 8 8"><path d="M0 4.500h8" stroke="#3c3b37" /></Svg></WindowButton>
              <WindowButton aria-label="Maximizar"><Svg s={8} box="0 0 8 8"><path d="M.5 1.500h7v5h-7z" fill="none" stroke="#3c3b37" /></Svg></WindowButton>
              <WindowButton aria-label="Cerrar" $close><Svg s={8} box="0 0 8 8"><path d="M1 1l6 6M7 1l-6 6" stroke="#3c2010" strokeWidth="1.500" /></Svg></WindowButton>
            </WindowButtons>
          </TitleBar>
          <MenuBar>
            {menus.map(([a, u, b]) => <MenuItem key={a + u + b}>{a}{u && <u>{u}</u>}{b}</MenuItem>)}
          </MenuBar>
          <Toolbars>
            {toolRows.map((row, r) => <Toolbar key={r}>{row.items.map((id, i) => <ToolItem key={i} id={id} handle={row.handle} />)}</Toolbar>)}
          </Toolbars>
          <WorkArea>
            <ComboView>
              <PanelTitle>Vista combinada<Grow /><FloatButton aria-label="Flotar"><FloatIcon /></FloatButton></PanelTitle>
              <TabRow><Tab $on>Modelo</Tab><Tab>Tareas</Tab></TabRow>
              <TabPane>
                <TreeFrame>
                  <TreeBody>
                    <TreeHeader><TreeHeaderCell>Etiquetas &amp; Atributos</TreeHeaderCell></TreeHeader>
                    <ul>
                      <RootRow>Aplicación</RootRow>
                      {tree.map((n) => (
                        <TreeRow key={n.t} $d={n.d} $dim={n.dim} $bold={n.bold} $sel={n.sel}>
                          <Expander aria-label={n.t}>{n.open !== undefined && <Arrow open={n.open} />}</Expander>
                          <TreeIcon><Svg s={16}>{TI[n.i]}</Svg></TreeIcon>
                          {n.t}
                        </TreeRow>
                      ))}
                    </ul>
                  </TreeBody>
                  <ScrollTrack>
                    <ScrollEnd aria-label="Subir"><Svg w={5} h={3} box="0 0 5 3"><path d="M0 3h5L2.500 0z" fill="#aaa" /></Svg></ScrollEnd>
                    <Thumb />
                    <Grow />
                    <ScrollEnd aria-label="Bajar"><Svg w={5} h={3} box="0 0 5 3"><path d="M0 0h5L2.500 3z" fill="#555" /></Svg></ScrollEnd>
                  </ScrollTrack>
                </TreeFrame>
                <Splitter $h={6} />
                <PropOuter>
                  <PropFrame>
                    <PropTable>
                      <colgroup><NameCol /><col /></colgroup>
                      <thead><tr><PropTh>Propiedad</PropTh><PropTh>Valor</PropTh></tr></thead>
                      <tbody>
                        <tr><GroupCell colSpan={2}>Base</GroupCell></tr>
                        {props.map((p, i) => (
                          <PropRow key={p.n} $alt={i % 2 === 0} $sel={p.edit}>
                            <NameTd>
                              <NameFlex $d={p.d}>
                                <Expander aria-label={p.n}>{p.open !== undefined && <Arrow open={p.open} />}</Expander>
                                <PropLabel>{p.n}</PropLabel>
                              </NameFlex>
                            </NameTd>
                            <ValueTd>
                              {p.edit ? (
                                <EditBox>
                                  <ValueInput aria-label="z" value={z} onChange={(e) => setZ(e.target.value)} />
                                  <FxButton aria-label="Expresión">
                                    <Svg s={16} box="0 0 16 16"><circle cx="8" cy="8" r="6.800" fill="#fff" stroke="#4a4af0" /><path d="M6.500 4.500q-1.500-.5-1.500 2l-.5 5M3.800 7.500h2.400M8 5q-1.500 3 0 6M8.500 6.500l3 4M11.500 6.500l-3 4M12 5q1.500 3 0 6" fill="none" stroke="#2a2af0" strokeWidth=".9" /></Svg>
                                  </FxButton>
                                  <Spin />
                                </EditBox>
                              ) : p.v}
                            </ValueTd>
                          </PropRow>
                        ))}
                      </tbody>
                    </PropTable>
                  </PropFrame>
                </PropOuter>
                <BottomTabs>
                  <SlantTab $w={48} $h={27}><Slant w={48} h={27} /><span>Vista</span></SlantTab>
                  <SlantTab $w={54} $h={28}><Slant w={54} h={28} on /><span>Datos</span></SlantTab>
                </BottomTabs>
              </TabPane>
              <SideGrip />
            </ComboView>
            <Mdi>
              <Canvas><ModelPlace><Model /></ModelPlace><AxesPlace><Axes /></AxesPlace></Canvas>
              <DocTab>
                <Logo s={15} hole="#fff" />
                <DocName>led-5mm : 1*</DocName>
                <CloseButton aria-label="Cerrar documento"><Svg s={14} box="0 0 14 14"><path d="M2.500 2.500l9 9M11.500 2.500l-9 9" stroke="#555" strokeWidth="4" /></Svg></CloseButton>
              </DocTab>
            </Mdi>
          </WorkArea>
          <Downloads>
            <Splitter $h={7} />
            <PanelTitle>Download Manager<Grow /><FloatButton aria-label="Flotar"><FloatIcon /></FloatButton><FloatButton aria-label="Cerrar panel"><CloseIcon /></FloatButton></PanelTitle>
            <DownloadItem>
              <Svg w={36} h={46} box="0 0 36 46">
                <path d="M.5 1H25L35.500 11.500V45H.5z" fill="#e2e2e2" stroke="#a6a6a6" /><path d="M25 1q2 6 0 8q4 0 10 3z" fill="#fff" stroke="#ccc" />
                <path d="M5 9h19M5 12h25M5 15h22M5 17.500h8M5 21h25M5 24h23M5 27h24M5 30h20M5 34h25M5 36.500h22M5 39h18" stroke="#a4a4a4" strokeDasharray="3 .6" />
              </Svg>
              <DownloadText><span>icezum.FCStd</span><Muted>3 MB</Muted></DownloadText>
              <PushButton $w={36} aria-label="Abrir carpeta">
                <Svg s={16} box="0 0 16 16"><path d="M0 2h5l1 1h7v10H1z" fill="#888" /><path d="M3 1h10v7H3z" fill="#d6d6d6" stroke="#aaa" /><path d="M4 7l12-1l-1 8H2z" fill="url(#folderBlue)" /></Svg>
              </PushButton>
            </DownloadItem>
            <DownloadFooter><PushButton $w={83}>Limpiar</PushButton><span>1 descarga</span></DownloadFooter>
          </Downloads>
          <StatusBar><span>(Ctrl+R) Recalcula el documento activo actual</span><span>138.95 x 81.86 mm</span></StatusBar>
        </Window>
      </Desktop>
    </Screen>
  );
}
